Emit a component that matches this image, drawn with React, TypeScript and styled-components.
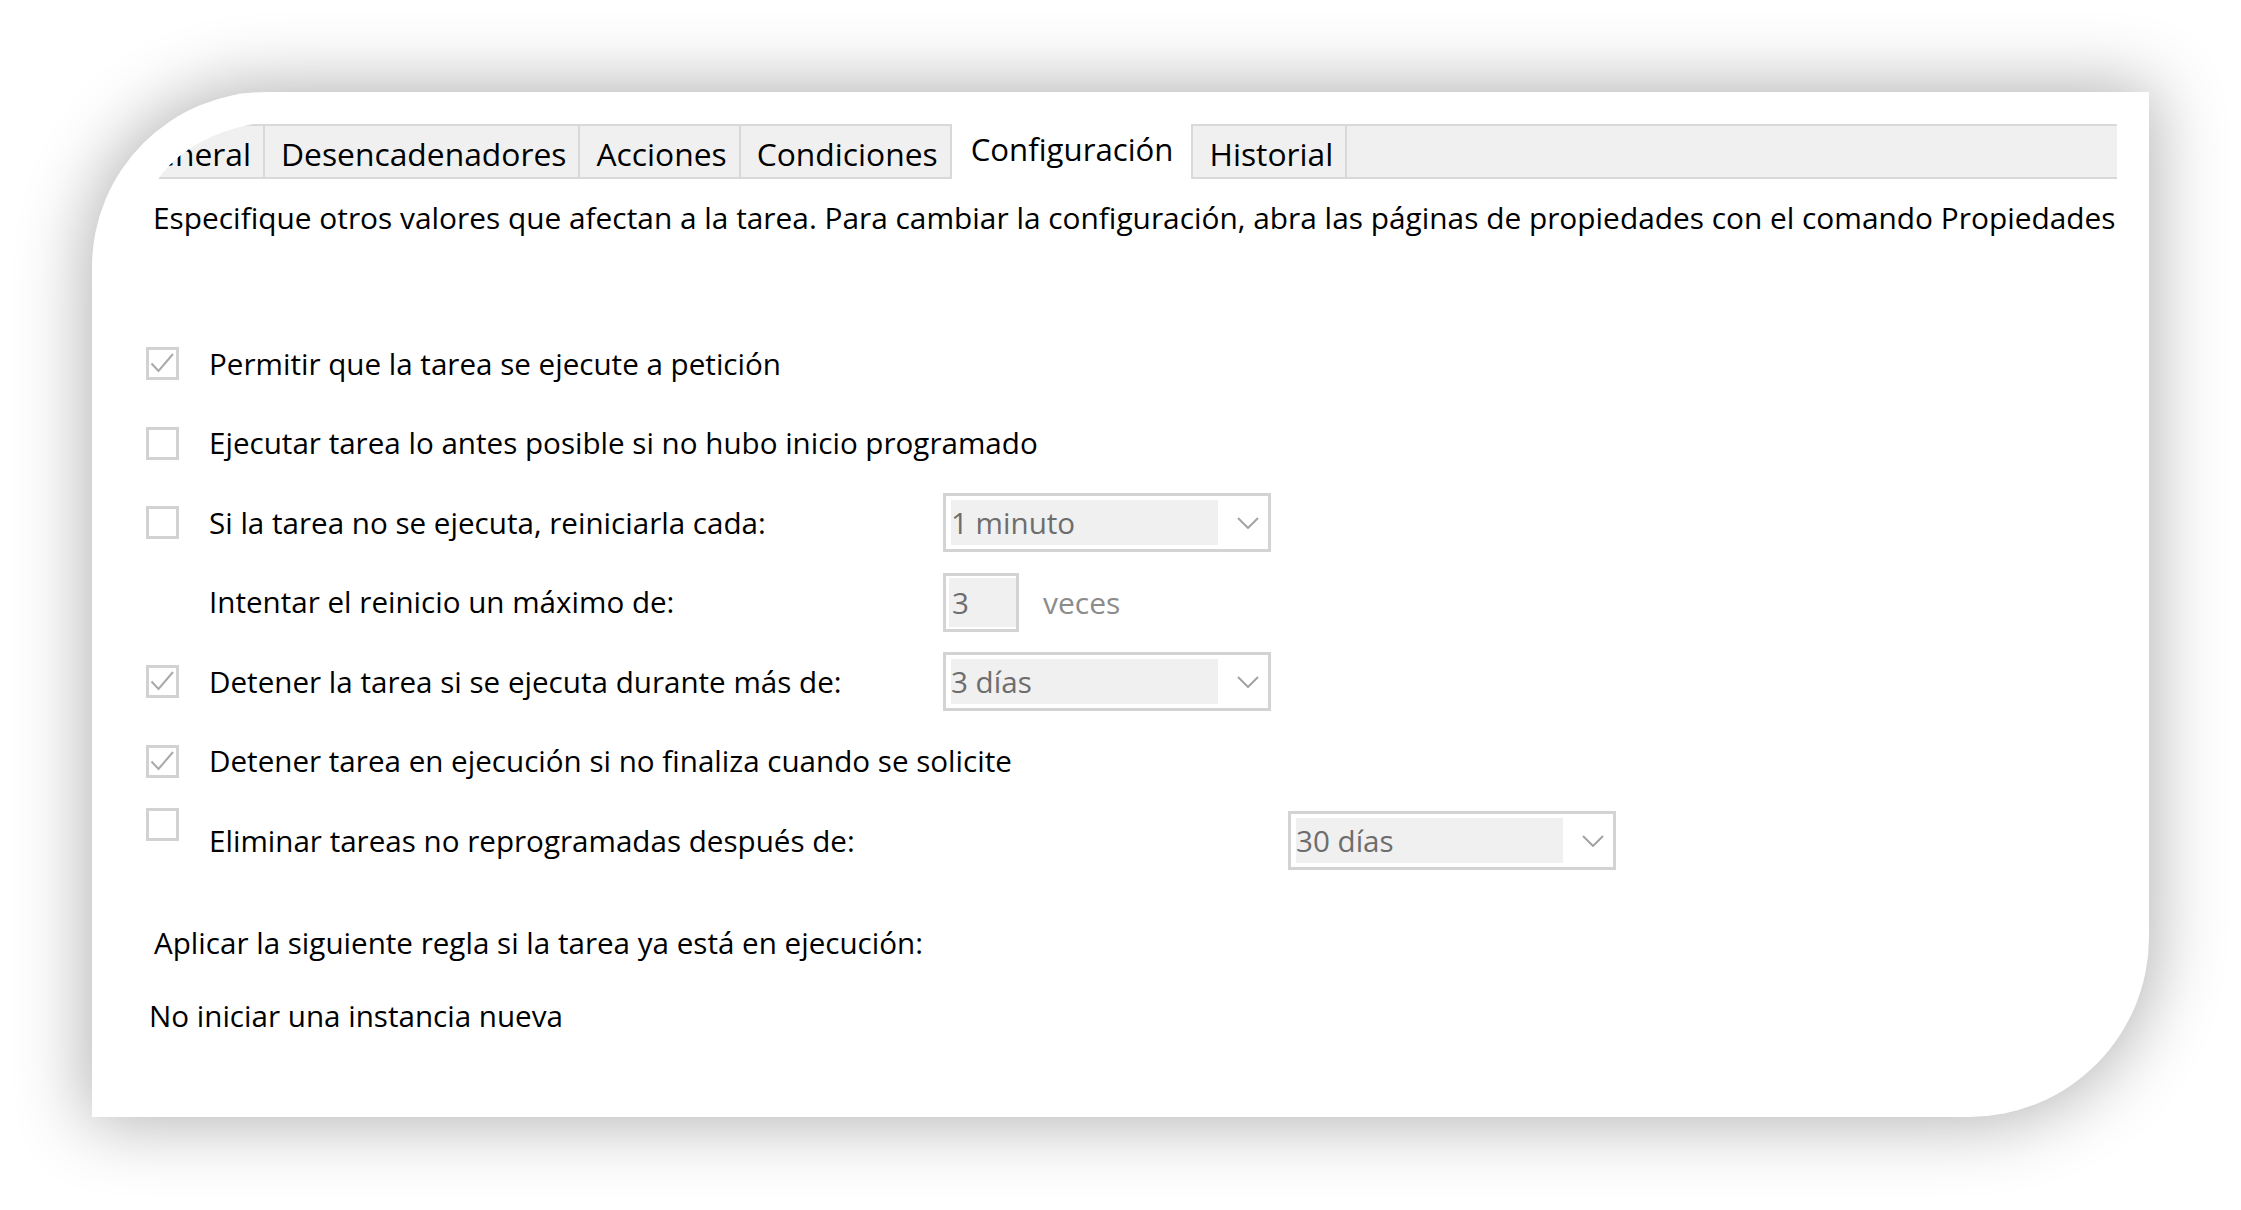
import React from "react";
import styled, { createGlobalStyle } from "styled-components";

const GlobalStyle = createGlobalStyle`
  html, body { margin: 0; padding: 0; background: #ffffff; }
  body { font-family: "Open Sans", "Noto Sans", sans-serif; color: #000; }
  * { box-sizing: border-box; }
`;

const Page = styled.div`
  padding: 92px 0 0 92px;
  width: 2241px;
  height: 1210px;
  overflow: hidden;
`;

const Card = styled.div`
  width: 2057px;
  height: 1025px;
  background: #ffffff;
  border-radius: 175px 0 180px 0;
  box-shadow: 0 0 70px 6px rgba(0, 0, 0, 0.3);
  padding: 28px 32px 0 53px;
  display: flex;
  flex-direction: column;
`;

const Screen = styled.div`
  flex: 1;
  overflow: hidden;
  border-top-left-radius: 150px 100px;
  padding-top: 4px;
  display: flex;
  flex-direction: column;
  font-size: 29.6px;
`;

const TabStrip = styled.div`
  height: 55px;
  background: #f0f0f0;
  border-top: 2px solid #d9d9d9;
  border-bottom: 2px solid #d9d9d9;
  display: flex;
  align-items: stretch;
`;

const TabRow = styled.div`
  display: flex;
  align-items: stretch;
  margin-left: -27px;
`;

const Tab = styled.div<{ $active?: boolean }>`
  display: flex;
  align-items: center;
  padding: ${(p) => (p.$active ? "0 18px 4px 19px" : "5px 12px 0 16px")};
  margin: ${(p) => (p.$active ? "-2px 0" : "0")};
  background: ${(p) => (p.$active ? "#ffffff" : "transparent")};
  border-right: 2px solid #d9d9d9;
  font-size: ${(p) => (p.$active ? "31.2px" : "31.8px")};
  line-height: 1;
  white-space: nowrap;
  color: #000;
`;

const Description = styled.div`
  margin-top: 19px;
  padding-left: 8px;
  font-size: 29.85px;
  line-height: 40px;
  white-space: nowrap;
`;

const Options = styled.div`
  margin-top: 86px;
  display: flex;
  flex-direction: column;
`;

const Row = styled.div`
  height: 79.5px;
  display: flex;
  align-items: center;
  padding-left: 1px;
`;

const CheckSlot = styled.div<{ $raised?: boolean }>`
  width: 33px;
  height: 33px;
  margin-right: 30px;
  flex: none;
  align-self: ${(p) => (p.$raised ? "flex-start" : "center")};
  margin-top: ${(p) => (p.$raised ? "7px" : "0")};
`;

const Box = styled.div`
  width: 33px;
  height: 33px;
  border: 3px solid #d2d2d2;
  background: #ffffff;
  display: flex;
`;

const Label = styled.div<{ $w?: number }>`
  width: ${(p) => (p.$w ? `${p.$w}px` : "auto")};
  flex: none;
  line-height: 40px;
  white-space: nowrap;
`;

const Combo = styled.div`
  width: 328px;
  height: 59px;
  border: 3px solid #d3d3d3;
  padding: 4px 5px;
  display: flex;
  align-items: center;
  flex: none;
`;

const ComboField = styled.div`
  width: 267px;
  height: 45px;
  background: #f0f0f0;
  color: #6d6d6d;
  display: flex;
  align-items: center;
  white-space: nowrap;
  font-size: 29.6px;
`;

const Chevron = styled.svg`
  width: 22px;
  height: 12px;
  margin-left: 19px;
  flex: none;
`;

const Spin = styled.div`
  width: 76px;
  height: 59px;
  border: 3px solid #d3d3d3;
  padding: 2px 0 2px 3px;
  display: flex;
  flex: none;
`;

const SpinField = styled.div`
  flex: 1;
  background: #f0f0f0;
  color: #6d6d6d;
  padding-left: 3px;
  display: flex;
  align-items: center;
  font-size: 29.6px;
`;

const Unit = styled.span`
  margin-left: 24px;
  color: #8c8c8c;
  font-size: 30px;
`;

const RuleLabel = styled.div`
  margin-top: 42px;
  padding-left: 9px;
  line-height: 40px;
`;

const RuleValue = styled.div`
  margin-top: 33px;
  padding-left: 4px;
  line-height: 40px;
`;

const Check: React.FC<{ checked?: boolean; raised?: boolean }> = ({ checked, raised }) => (
  <CheckSlot $raised={raised}>
    <Box>
      {checked && (
        <svg width="27" height="27" viewBox="0 0 27 27">
          <path d="M2.5 13.5 L9.5 21 L24 4" fill="none" stroke="#a9a9a9" strokeWidth="2" />
        </svg>
      )}
    </Box>
  </CheckSlot>
);

const Dropdown: React.FC<{ value: string }> = ({ value }) => (
  <Combo>
    <ComboField>{value}</ComboField>
    <Chevron viewBox="0 0 22 12">
      <path d="M1 1 L11 11 L21 1" fill="none" stroke="#a3a3a3" strokeWidth="2" />
    </Chevron>
  </Combo>
);

const tabs = ["General", "Desencadenadores", "Acciones", "Condiciones", "Configuración", "Historial"];

export default function App() {
  return (
    <>
      <GlobalStyle />
      <Page>
        <Card>
          <Screen>
            <TabStrip>
              <TabRow>
                {tabs.map((t) => (
                  <Tab key={t} $active={t === "Configuración"}>
                    {t}
                  </Tab>
                ))}
              </TabRow>
            </TabStrip>
            <Description>
              Especifique otros valores que afectan a la tarea. Para cambiar la configuración, abra las páginas de propiedades con el comando Propiedades.
            </Description>
            <Options>
              <Row>
                <Check checked />
                <Label>Permitir que la tarea se ejecute a petición</Label>
              </Row>
              <Row>
                <Check />
                <Label>Ejecutar tarea lo antes posible si no hubo inicio programado</Label>
              </Row>
              <Row>
                <Check />
                <Label $w={734}>Si la tarea no se ejecuta, reiniciarla cada:</Label>
                <Dropdown value="1 minuto" />
              </Row>
              <Row>
                <CheckSlot />
                <Label $w={734}>Intentar el reinicio un máximo de:</Label>
                <Spin>
                  <SpinField>3</SpinField>
                </Spin>
                <Unit>veces</Unit>
              </Row>
              <Row>
                <Check checked />
                <Label $w={734}>Detener la tarea si se ejecuta durante más de:</Label>
                <Dropdown value="3 días" />
              </Row>
              <Row>
                <Check checked />
                <Label>Detener tarea en ejecución si no finaliza cuando se solicite</Label>
              </Row>
              <Row>
                <Check raised />
                <Label $w={1079}>Eliminar tareas no reprogramadas después de:</Label>
                <Dropdown value="30 días" />
              </Row>
            </Options>
            <RuleLabel>Aplicar la siguiente regla si la tarea ya está en ejecución:</RuleLabel>
            <RuleValue>No iniciar una instancia nueva</RuleValue>
          </Screen>
        </Card>
      </Page>
    </>
  );
}
